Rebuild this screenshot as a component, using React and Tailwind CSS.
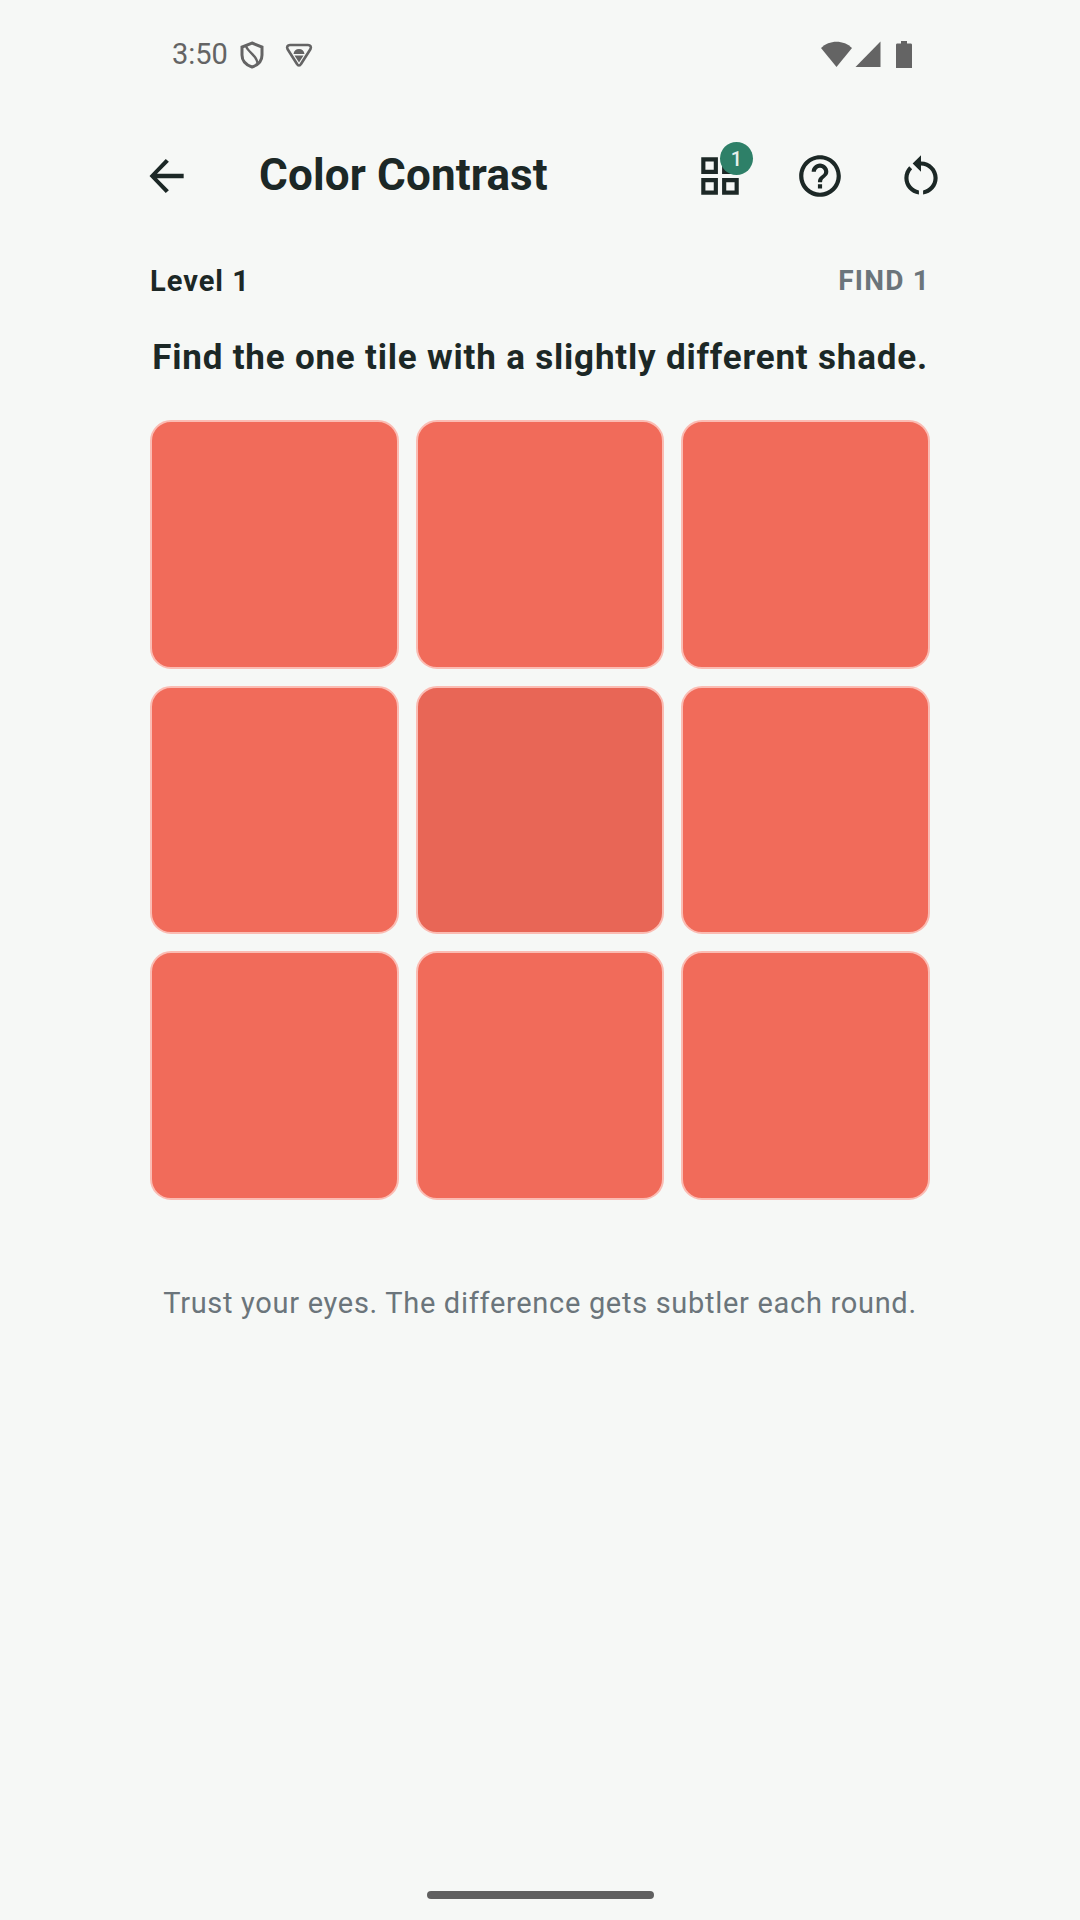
const INK = "#1c2826";

function MIcon({ d, className = "" }) {
  return (
    <svg viewBox="0 0 24 24" className={`w-[50px] h-[50px] ${className}`} fill={INK}>
      <path d={d} />
    </svg>
  );
}

function Tile({ odd }) {
  return (
    <div
      className={`aspect-square rounded-[21px] border-2 border-[#fbbcb3] ${
        odd ? "bg-[#e86656]" : "bg-[#f16b5a]"
      }`}
    />
  );
}

export default function App() {
  const tiles = [0, 1, 2, 3, 4, 5, 6, 7, 8];
  return (
    <div className="w-[1080px] h-[1920px] bg-[#f6f8f6] flex flex-col font-['Roboto',sans-serif] overflow-hidden">
      {/* status bar */}
      <div className="h-[108px] flex items-center pl-[172px] pr-[168px] text-[#646464]">
        <span className="text-[29px] leading-none mt-[1px]">3:50</span>
        <svg viewBox="0 0 24 28" className="ml-[12px] mt-[2px] w-[24px] h-[28px]" fill="none" stroke="#646464" strokeWidth="3">
          <path d="M12 2 L22 6 V14 C22 20 18 24 12 26 C6 24 2 20 2 14 V6 Z" />
          <path d="M6 5 C8 12 17 13 18 24" strokeWidth="2.4" />
        </svg>
        <svg viewBox="0 0 28 26" className="ml-[21px] mt-[1px] w-[28px] h-[26px]">
          <path d="M5 3 H23 C25.5 3 26.5 5 25.5 7 L16 22 C15 24 13 24 12 22 L2.5 7 C1.5 5 2.5 3 5 3 Z" fill="none" stroke="#646464" strokeWidth="2.6" />
          <path d="M8.5 12 C9 8.5 11 7 14 7 C17 7 19 8.5 19.5 12 Z M9.5 13.5 H18.5 L14 20.5 Z" fill="#646464" />
        </svg>
        <div className="ml-auto flex items-center">
          <svg viewBox="0 0 31 26" className="w-[31px] h-[26px]" fill="#646464">
            <path d="M0 7 C8 -1.5 23 -1.5 31 7 L15.5 26 Z" />
          </svg>
          <svg viewBox="0 0 26 26" className="ml-[3px] w-[26px] h-[26px]" fill="#646464">
            <path d="M25.5 0.5 V26 H0.5 Z" />
          </svg>
          <svg viewBox="0 0 16 27" className="ml-[15px] w-[16px] h-[27px]" fill="#646464">
            <path d="M5 0 H11 V2.5 H14.5 C15.5 2.5 16 3 16 4 V27 H0 V4 C0 3 0.5 2.5 1.5 2.5 H5 Z" />
          </svg>
        </div>
      </div>

      {/* app bar */}
      <div className="h-[136px] flex items-center pl-[142px] pr-[134px]">
        <MIcon d="M20 10.9H7.2l5.7-5.7L11.4 3.8 3.6 12l7.8 8.2 1.5-1.4-5.7-5.7H20z" />
        <h1 className="ml-[67px] mb-[2px] text-[44px] leading-none font-bold text-[#1c2826] tracking-[0.15px]">Color Contrast</h1>
        <div className="ml-auto flex items-center gap-[51px]">
          <div className="relative w-[50px] h-[50px] mr-[-1px] ml-[1px]">
            <MIcon d="M3 3v8h8V3H3zm6 6H5V5h4v4zm-6 4v8h8v-8H3zm6 6H5v-4h4v4zm4-16v8h8V3h-8zm6 6h-4V5h4v4zm-6 4v8h8v-8h-8zm6 6h-4v-4h4v4z" />
            <div className="absolute left-[25px] top-[-9px] w-[33px] h-[33px] rounded-full bg-[#2e8068] text-[#e6f0ec] text-[20px] font-medium flex items-center justify-center leading-none">
              1
            </div>
          </div>
          <MIcon d="M11 18h2v-2h-2v2zm1-16C6.48 2 2 6.48 2 12s4.48 10 10 10 10-4.48 10-10S17.52 2 12 2zm0 18c-4.41 0-8-3.59-8-8s3.59-8 8-8 8 3.59 8 8-3.59 8-8 8zm0-14c-2.21 0-4 1.79-4 4h2c0-1.1.9-2 2-2s2 .9 2 2c0 2-3 1.75-3 5h2c0-2.25 3-2.5 3-5 0-2.21-1.79-4-4-4z" />
          <MIcon d="M12 5V2L8 6l4 4V7c3.31 0 6 2.69 6 6 0 2.97-2.17 5.43-5 5.91v2.02c3.95-.49 7-3.85 7-7.93 0-4.42-3.58-8-8-8zm-6 8c0-1.65.67-3.15 1.76-4.24L6.34 7.34C4.9 8.79 4 10.79 4 13c0 4.08 3.05 7.44 7 7.93v-2.02c-2.83-.48-5-2.94-5-5.91z" />
        </div>
      </div>

      {/* body */}
      <div className="px-[150px] flex flex-col">
        <div className="mt-[21px] h-[32px] flex items-center justify-between">
          <span className="text-[29px] leading-none font-bold text-[#1c2826] tracking-[1px]">Level 1</span>
          <span className="text-[28px] leading-none font-bold text-[#6b757b] tracking-[1.2px]">FIND 1</span>
        </div>
        <p className="mt-[41px] h-[40px] text-[35px] leading-[40px] font-bold text-[#1c2826] text-center tracking-[0.8px] whitespace-nowrap">
          Find the one tile with a slightly different shade.
        </p>
        <div className="mt-[42px] grid grid-cols-3 gap-[17px]">
          {tiles.map((i) => (
            <Tile key={i} odd={i === 4} />
          ))}
        </div>
        <p className="mt-[85px] text-[29px] leading-[36px] text-[#6b757b] text-center tracking-[0.7px] whitespace-nowrap">
          Trust your eyes. The difference gets subtler each round.
        </p>
      </div>

      {/* gesture bar */}
      <div className="mt-auto mb-[21px] mx-auto w-[227px] h-[8px] rounded-full bg-[#606060]" />
    </div>
  );
}
